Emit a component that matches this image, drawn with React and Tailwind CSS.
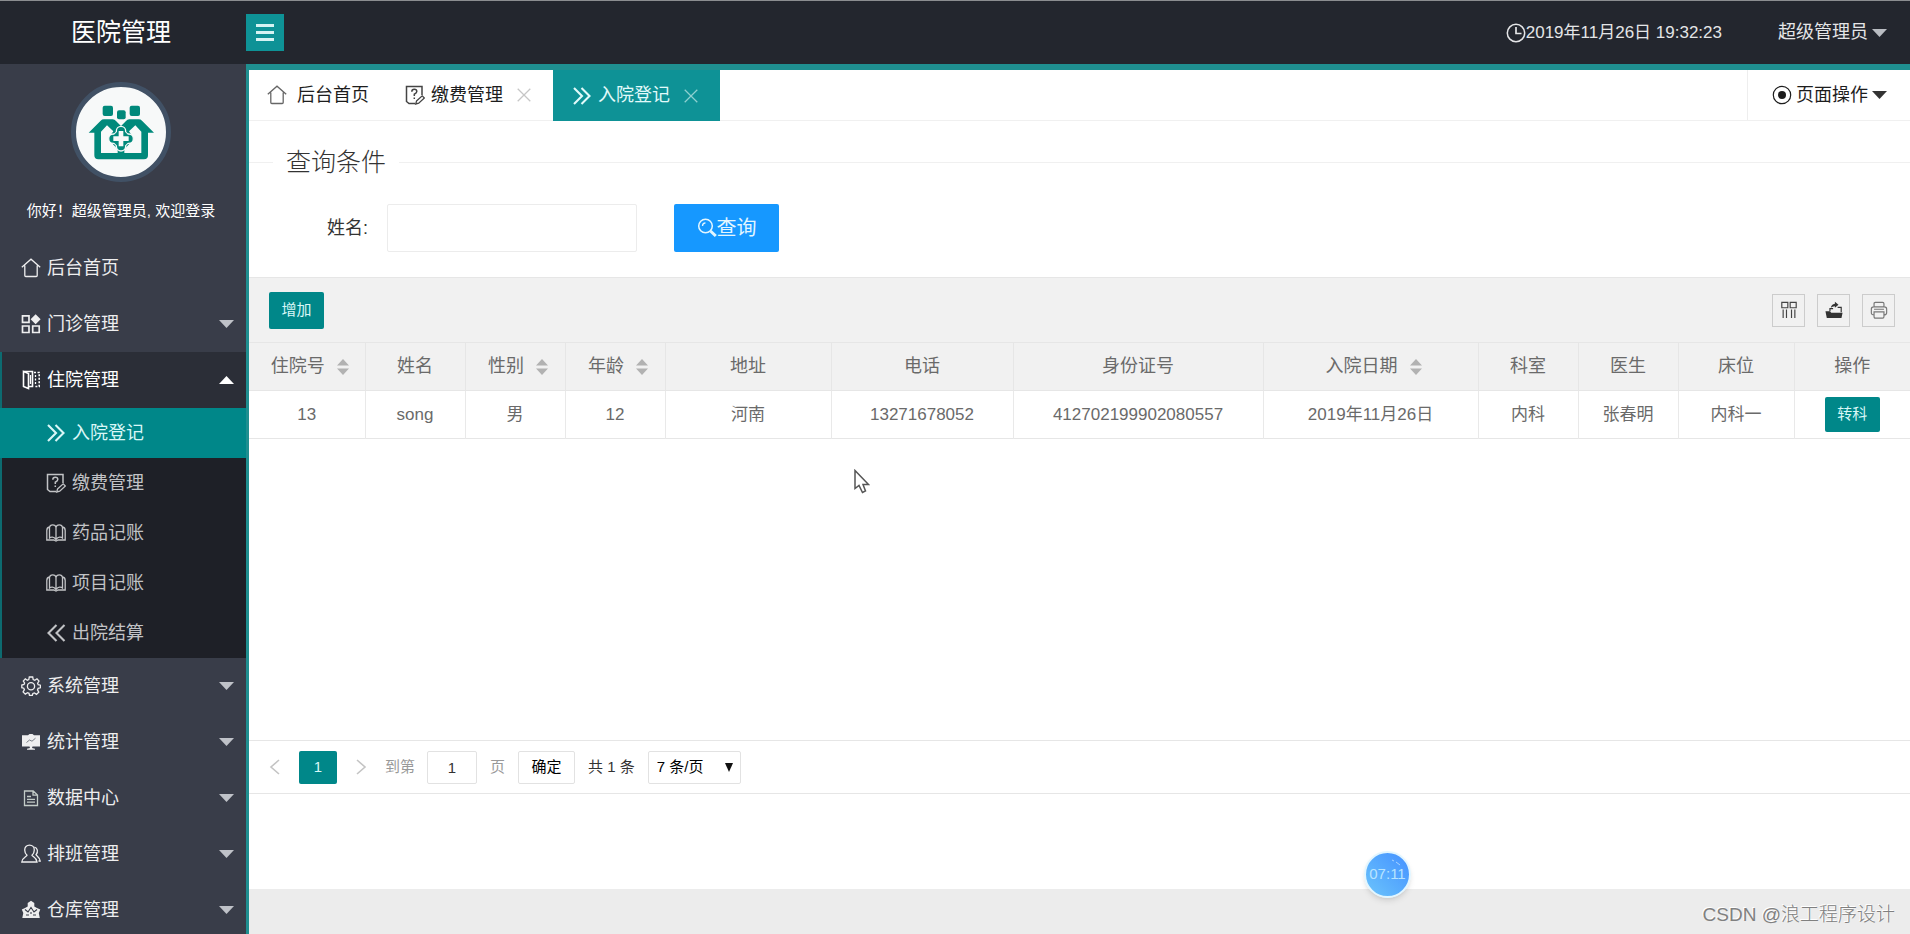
import React from 'react';

const Svg = ({ size = 20, className = '', children }) => (
    <svg
        width={size}
        height={size}
        viewBox="0 0 20 20"
        fill="none"
        stroke="currentColor"
        strokeWidth="1.3"
        aria-hidden="true"
        className={`shrink-0 ${className}`}
    >
        {children}
    </svg>
);

const HomeIcon = (props) => (
    <Svg {...props}>
        <path d="M.8 9.2 10 1.2l9.200 8M3.800 7.500V17.500Q3.800 18.500 4.800 18.500H15.200Q16.200 18.500 16.200 17.500V7.500" />
    </Svg>
);

const ModuleIcon = (props) => (
    <Svg {...props}>
        <path strokeWidth="1.700" d="M1.500 1.900h6.500v6.500H1.500zM1.500 12h6.500v6.500H1.500zM11.700 12h6.500v6.500h-6.500z" />
        <path fill="currentColor" stroke="none" d="m14.600.2 5 5-5 5-5-5z" />
    </Svg>
);

const BookmarkIcon = (props) => (
    <Svg {...props}>
        <path strokeWidth="1.600" d="M2.500 1.500 7.500 3.500V18.500L2.500 16.500z" />
        <path strokeWidth="1.600" d="M2.500 1.500H11.500V16.500h-4" />
        <path d="M9.500 5v9" />
        <path strokeWidth="1.600" strokeDasharray="2 1.500" d="M13 2.500h5.200v14H13" />
        <path strokeDasharray="2 1.500" d="M14.500 5v10" />
    </Svg>
);

const NextIcon = (props) => (
    <Svg {...props}>
        <path strokeWidth="2.100" d="m2 2 8 8-8 8M9.500 2l8 8-8 8" />
    </Svg>
);

const PrevIcon = (props) => (
    <Svg {...props}>
        <path strokeWidth="2.100" d="m10.500 2-8 8 8 8M18.500 2l-8 8 8 8" />
    </Svg>
);

const SurveyIcon = (props) => (
    <Svg {...props}>
        <path strokeWidth="1.500" d="M17 10V1.500H1.500v15L4 18.500h6" />
        <path strokeWidth="1.500" d="M6.800 6.700q0-2.400 2.500-2.400t2.500 2.200q0 1.500-2.500 2.700v1.800M9.300 12.500V14" />
        <path d="m11.500 16 5.700-5.200 2.200 2.200-5.700 5.200-3 .8z" />
    </Svg>
);

const ReadIcon = (props) => (
    <Svg {...props}>
        <path d="M10 4.500v12M10 4.500Q9.500 1.800 6.700 1.800T3.500 4.500v10.500q1.200-1 3-.8T10 16.500M10 4.500q.5-2.700 3.300-2.700t3.200 2.700v10.500q-1.200-1-3-.8T10 16.500" />
        <path d="M3.500 4Q.8 4.500.8 7.500v9.500h7l2.200 1 2.200-1h7V7.500Q19.200 4.500 16.500 4" />
    </Svg>
);

const GearIcon = (props) => (
    <Svg {...props}>
        <path d="M8.300 1h3.400l.5 2.600 1.600.7L16 2.800l2 2.200-1.400 2.200.6 1.500 2.200.5v2.600l-2.300.6-.6 1.500 1.300 2.200-2.300 2.200-2.100-1.400-1.500.6-.6 2H8.500L8 17.300l-1.500-.6-2.200 1.400-2.200-2.200 1.300-2.200-.6-1.500-2-.5V9l2.200-.5.6-1.500L2.300 5l2-2.200 2 1.500 1.500-.7z" />
        <circle cx="10" cy="10.300" r="3.600" />
    </Svg>
);

const ChartIcon = (props) => (
    <Svg {...props}>
        <path fill="currentColor" stroke="none" d="M1 3.300h6L8.500 2h3L13 3.300h6v11.200h-7.500L11 16l3 .8v.9H6v-.9L9 16l-.5-1.500H1z" />
        <path stroke="#7b8088" strokeWidth="1" d="m5.500 10.500 3-2.500 2.500 1.200 3.500-3" />
    </Svg>
);

const FileIcon = (props) => (
    <Svg {...props}>
        <path stroke="#c3ccc8" d="M3.500 3h8.700L16.500 7v10.500h-13zM12 3v4.200h4.500M6 8.500h4M6 11.300h8M6 14.200h8" />
    </Svg>
);

const UserIcon = (props) => (
    <Svg {...props}>
        <path d="M8.500 1.200c3 0 4.800 2 4.800 4.800 0 2.300-1 4-2.300 5.200.5 1.500 4.200 1.700 5 6.800H.8c.4-4.500 4.700-5.300 5.200-6.800C4.700 10 3.700 8.300 3.700 6c0-2.800 1.800-4.800 4.800-4.800z" />
        <path d="M13.300 3c3.300 1 4.200 5 1.700 7.700.5 1 3.500 2.300 4.200 6.300h-1.700" />
    </Svg>
);

const TreeIcon = (props) => (
    <Svg {...props}>
        <path fill="currentColor" stroke="none" d="M10 .8 13.300 3v3.500L16 8l3.300 1.500-1.500 3.500 1 5H1.300l1-5L.8 9.500 4 8l2.700-1.500V3z" />
        <path stroke="#393d49" strokeWidth="1.100" d="M4 9.500 7 12l3-4.500 3 4.500 3-2.500M5 15h3m4 0h3M10 12v2" />
    </Svg>
);

const ClockIcon = (props) => (
    <Svg {...props}>
        <circle cx="10" cy="10" r="8.700" strokeWidth="1.500" />
        <path strokeWidth="1.700" d="M10 4v6.500h5.500" />
    </Svg>
);

const RadioIcon = (props) => (
    <Svg {...props}>
        <circle cx="10" cy="10" r="8.700" strokeWidth="1.200" />
        <circle cx="10" cy="10" r="4" fill="currentColor" stroke="none" />
    </Svg>
);

const SearchIcon = (props) => (
    <Svg {...props}>
        <circle cx="8.500" cy="8" r="6.800" strokeWidth="1.500" />
        <path d="M5.500 8q0-3 3-3.200" />
        <path strokeWidth="3" d="m13.500 13 5.300 5" />
    </Svg>
);

const ColumnsIcon = (props) => (
    <Svg {...props}>
        <path d="M2 1.500h6.700v6H2zM11.300 1.500H18v6h-6.700zM3.500 9.500v9.500M7.200 9.500v9.500M12.800 9.500v9.500M16.500 9.500v9.500" />
    </Svg>
);

const ExportIcon = (props) => (
    <Svg {...props}>
        <path fill="currentColor" stroke="none" d="M.5 11.500h5l1.500 1.500h12.500l-1.200 6H2z" />
        <path d="M5.500 11.500V8.500H9M14 7h4v5.500" />
        <path fill="currentColor" stroke="none" d="M6.500 7.500q.5-4 4.500-4.500V.8l4 3.300-4 3.400V5.800Q8 5.800 6.500 7.500z" />
    </Svg>
);

const PrinterIcon = (props) => (
    <Svg {...props}>
        <path d="M4.500 6.500V3q0-1.500 1.500-1.500h8q1.500 0 1.500 1.500v3.500M4.500 15.500Q1.500 15.500 1.500 13V9Q1.500 6.500 4 6.500h12Q18.500 6.500 18.500 9v4q0 2.500-3 2.500M4.500 12h11v5.500q0 1.500-1.500 1.500H6q-1.500 0-1.500-1.500zM4.500 9.200h11" />
    </Svg>
);

const CloseIcon = (props) => (
    <Svg {...props}>
        <path strokeWidth="1.800" d="m1 1 18 18M19 1 1 19" />
    </Svg>
);

const Caret = ({ up = false, className = '' }) => (
    <svg width="15" height="8" viewBox="0 0 15 8" aria-hidden="true" className={`shrink-0 ${className}`}>
        <path fill="currentColor" d={up ? 'M0 8h15L7.500 0z' : 'M0 0h15L7.500 8z'} />
    </svg>
);

const SortIcon = () => (
    <svg width="12" height="16" viewBox="0 0 12 16" aria-hidden="true" className="text-[#b2b2b2]">
        <path fill="currentColor" d="M0 6.500h12L6 0zM0 9.500h12l-6 6.500z" />
    </svg>
);

const Logo = () => (
    <svg viewBox="0 0 270 270" className="h-full w-full" aria-hidden="true">
        <g fill="#00897b">
            <rect x="80" y="56" width="31" height="31" rx="6" />
            <rect x="123" y="70" width="26" height="27" rx="6" />
            <rect x="161" y="56" width="31" height="31" rx="6" />
            <path d="M38 137 74 101Q78 97 84 97H110Q116 97 120 102L135 117 150 102Q154 97 160 97H188Q194 97 198 101L234 137H216V205Q216 217 204 217H67Q55 217 55 205V137Z" />
        </g>
        <path fill="#f7f9f9" d="M75 198V134L93 115 112 133 96 155 125 187V198ZM196 198V134L178 115 159 133 174 155 145 187V198Z" />
        <g fill="#f7f9f9">
            <rect x="109" y="129" width="52" height="52" transform="rotate(45 135 155)" />
            <circle cx="135" cy="132" r="16" />
            <circle cx="135" cy="178" r="16" />
            <circle cx="112" cy="155" r="16" />
            <circle cx="158" cy="155" r="16" />
        </g>
        <g fill="#00897b">
            <rect x="112" y="132" width="46" height="46" transform="rotate(45 135 155)" />
            <circle cx="135" cy="132" r="12" />
            <circle cx="135" cy="178" r="12" />
            <circle cx="112" cy="155" r="12" />
            <circle cx="158" cy="155" r="12" />
        </g>
        <path fill="#f7f9f9" d="M128 132h14v16h16v14h-16v16h-14v-16h-16v-14h16z" />
    </svg>
);

const SUB_MENU = [
    { label: '入院登记', icon: NextIcon, active: true },
    { label: '缴费管理', icon: SurveyIcon },
    { label: '药品记账', icon: ReadIcon },
    { label: '项目记账', icon: ReadIcon },
    { label: '出院结算', icon: PrevIcon },
];

const MENU = [
    { label: '后台首页', icon: HomeIcon },
    { label: '门诊管理', icon: ModuleIcon, expandable: true },
    { label: '住院管理', icon: BookmarkIcon, expandable: true, children: SUB_MENU },
    { label: '系统管理', icon: GearIcon, expandable: true },
    { label: '统计管理', icon: ChartIcon, expandable: true },
    { label: '数据中心', icon: FileIcon, expandable: true },
    { label: '排班管理', icon: UserIcon, expandable: true },
    { label: '仓库管理', icon: TreeIcon, expandable: true },
];

const COLUMNS = [
    { title: '住院号', width: 'w-[116px]', sort: true },
    { title: '姓名', width: 'w-[100px]' },
    { title: '性别', width: 'w-[100px]', sort: true },
    { title: '年龄', width: 'w-[100px]', sort: true },
    { title: '地址', width: 'w-[166px]' },
    { title: '电话', width: 'w-[182px]' },
    { title: '身份证号', width: 'w-[250px]' },
    { title: '入院日期', width: 'w-[215px]', sort: true },
    { title: '科室', width: 'w-[100px]' },
    { title: '医生', width: 'w-[100px]' },
    { title: '床位', width: 'w-[116px]' },
    { title: '操作', width: '' },
];

const ROWS = [
    ['13', 'song', '男', '12', '河南', '13271678052', '412702199902080557', '2019年11月26日', '内科', '张春明', '内科一'],
];

const Header = () => (
    <header className="flex h-16 shrink-0 items-center border-t border-[#8b8d90] bg-[#23262e] text-[#e4e5e7]">
        <h1 className="w-[246px] shrink-0 pr-1 text-center text-[25px] leading-none text-white">医院管理</h1>
        <button type="button" aria-label="菜单" className="flex h-[37px] w-[38px] flex-col items-center justify-center gap-1 bg-[#0e9296]">
            <span className="h-[3px] w-[18px] bg-[#d5f3f3]" />
            <span className="h-[3px] w-[18px] bg-[#d5f3f3]" />
            <span className="h-[3px] w-[18px] bg-[#d5f3f3]" />
        </button>
        <div className="ml-auto flex items-center text-[17px]">
            <ClockIcon />
            <time>2019年11月26日 19:32:23</time>
        </div>
        <button type="button" className="mr-[23px] ml-14 flex items-center gap-1 text-[18px]">
            超级管理员
            <Caret className="text-[#b9bcc2]" />
        </button>
    </header>
);

const Sidebar = () => (
    <aside className="flex w-[246px] shrink-0 flex-col overflow-hidden bg-[#393d49] text-white">
        <div className="flex h-44 shrink-0 flex-col items-center pt-[18px] pr-1">
            <div className="h-[100px] w-[100px] rounded-full border-[5px] border-[#415165] bg-[#f7f9f9]">
                <Logo />
            </div>
            <p className="mt-[17px] text-[15px] leading-6 whitespace-nowrap">你好！超级管理员, 欢迎登录</p>
        </div>
        <nav>
            {MENU.map(({ label, icon: Icon, expandable, children }) => (
                <div key={label} className={children ? 'border-l-2 border-[#0d6b70]' : 'border-l-2 border-transparent'}>
                    <a
                        href="#"
                        className={`flex h-14 items-center gap-1.5 pr-3 pl-[19px] text-[18px] ${children ? 'bg-[#2b2e37] text-white' : 'text-[#eeeeef]'}`}
                    >
                        <Icon />
                        {label}
                        {expandable && <Caret up={!!children} className={`ml-auto ${children ? 'text-white' : 'text-[#bfc2c8]'}`} />}
                    </a>
                    {children && (
                        <ul className="bg-[#1e2027]">
                            {children.map(({ label: name, icon: SubIcon, active }) => (
                                <li key={name}>
                                    <a
                                        href="#"
                                        className={`flex h-[50px] items-center gap-1.5 text-[18px] ${active ? '-ml-0.5 bg-[#008789] pl-[46px] text-[#d9f7f7]' : 'pl-11 text-[#c2c3c6]'}`}
                                    >
                                        <SubIcon />
                                        {name}
                                    </a>
                                </li>
                            ))}
                        </ul>
                    )}
                </div>
            ))}
        </nav>
    </aside>
);

const TabBar = () => (
    <div className="flex h-[51px] shrink-0 border-b border-[#f0f0f0] text-[18px] text-[#1d1d1d]">
        <a href="#" className="flex items-center gap-2.5 px-[18px]">
            <HomeIcon className="text-[#666]" />
            后台首页
        </a>
        <div className="flex items-center pr-[22px] pl-[18px]">
            <a href="#" className="flex items-center gap-1.5">
                <SurveyIcon className="text-[#444]" />
                缴费管理
            </a>
            <button type="button" aria-label="关闭 缴费管理" className="ml-3.5 text-[#c6c6c6]">
                <CloseIcon size={14} />
            </button>
        </div>
        <div className="-mb-px flex items-center bg-[#0e9296] pr-[22px] pl-[19px] text-[#e2fafa]">
            <a href="#" className="flex items-center gap-1.5">
                <NextIcon />
                入院登记
            </a>
            <button type="button" aria-label="关闭 入院登记" className="ml-3.5 text-[#8ed0d0]">
                <CloseIcon size={14} />
            </button>
        </div>
        <button type="button" className="ml-auto flex items-center gap-1 border-l border-[#eee] pr-[23px] pl-6">
            <RadioIcon />
            页面操作
            <Caret className="text-[#333]" />
        </button>
    </div>
);

const SearchForm = () => (
    <form onSubmit={(e) => e.preventDefault()}>
        <fieldset className="mt-[21px] border-t border-[#f0f0f0]">
            <legend className="ml-6 px-[13px] text-[25px] leading-10 font-light text-[#333]">查询条件</legend>
            <div className="flex items-center pt-[22px] pb-[25px] text-[18px]">
                <label htmlFor="patient-name" className="w-[138px] pr-[19px] text-right text-[#333]">
                    姓名:
                </label>
                <input id="patient-name" type="text" className="h-12 w-[250px] rounded-xs border border-[#ececec] px-3 outline-none" />
                <button type="submit" className="ml-[37px] flex h-12 w-[105px] items-center justify-center rounded-xs bg-[#1698ff] text-[20px] text-[#e3f6ff]">
                    <SearchIcon />
                    查询
                </button>
            </div>
        </fieldset>
    </form>
);

const TOOLS = [
    { name: '筛选列', icon: ColumnsIcon, color: 'text-[#444]' },
    { name: '导出', icon: ExportIcon, color: 'text-[#333]' },
    { name: '打印', icon: PrinterIcon, color: 'text-[#777]' },
];

const PatientTable = () => (
    <section>
        <div className="flex h-[65px] items-center border-t border-[#e6e6e6] bg-[#f1f1f1] pr-[15px] pl-5">
            <button type="button" className="h-[37px] w-[55px] rounded-xs bg-[#008789] text-[15px] text-[#d9f7f7]">
                增加
            </button>
            <div className="ml-auto flex gap-3">
                {TOOLS.map(({ name, icon: Icon, color }) => (
                    <button key={name} type="button" aria-label={name} className={`flex h-[33px] w-[33px] items-center justify-center border border-[#ccc] ${color}`}>
                        <Icon size={18} />
                    </button>
                ))}
            </div>
        </div>
        <table className="w-full table-fixed border-collapse text-[#6a6a6a]">
            <thead className="bg-[#f1f1f1]">
                <tr className="h-12 border-y border-[#e6e6e6]">
                    {COLUMNS.map(({ title, width, sort }) => (
                        <th key={title} className={`${width} border-r border-[#e6e6e6] text-[18px] font-normal last:border-r-0`}>
                            {sort ? (
                                <button type="button" className="inline-flex items-center gap-3 pl-1.5 align-middle">
                                    {title}
                                    <SortIcon />
                                </button>
                            ) : (
                                title
                            )}
                        </th>
                    ))}
                </tr>
            </thead>
            <tbody>
                {ROWS.map((row) => (
                    <tr key={row[0]} className="h-12 border-b border-[#e6e6e6] text-center text-[17px]">
                        {row.map((cell, i) => (
                            <td key={i} className="border-r border-[#e9e9e9]">
                                {cell}
                            </td>
                        ))}
                        <td>
                            <button type="button" className="h-[35px] w-[55px] rounded-xs bg-[#008789] align-middle text-[15px] text-[#d9f7f7]">
                                转科
                            </button>
                        </td>
                    </tr>
                ))}
            </tbody>
        </table>
    </section>
);

const Pagination = () => (
    <div className="flex h-[54px] shrink-0 items-center border-y border-[#e6e6e6] pl-5 text-[15px] text-[#333]">
        <button type="button" aria-label="上一页" className="text-[#c4c4c4]">
            <svg width="12" height="16" viewBox="0 0 12 16" fill="none" stroke="currentColor" strokeWidth="1.600">
                <path d="M10 1 2 8l8 7" />
            </svg>
        </button>
        <button type="button" className="ml-[18px] h-[33px] w-[38px] rounded-xs bg-[#008789] text-[#d9f7f7]">
            1
        </button>
        <button type="button" aria-label="下一页" className="ml-[18px] text-[#c4c4c4]">
            <svg width="12" height="16" viewBox="0 0 12 16" fill="none" stroke="currentColor" strokeWidth="1.600">
                <path d="m2 1 8 7-8 7" />
            </svg>
        </button>
        <label htmlFor="page-no" className="ml-[18px] text-[#999]">到第</label>
        <input id="page-no" type="text" defaultValue="1" className="ml-3 h-[33px] w-[50px] rounded-xs border border-[#e2e2e2] text-center outline-none" />
        <span className="ml-[13px] text-[#999]">页</span>
        <button type="button" className="ml-[13px] h-[33px] w-[57px] rounded-xs border border-[#e2e2e2] text-black">
            确定
        </button>
        <span className="ml-[13px]">共 1 条</span>
        <div className="relative ml-[13px]">
            <select aria-label="每页条数" className="h-[33px] w-[93px] appearance-none rounded-xs border border-[#e2e2e2] bg-white pl-2 text-black outline-none">
                <option>7 条/页</option>
            </select>
            <svg width="8" height="9" viewBox="0 0 8 9" aria-hidden="true" className="pointer-events-none absolute top-3 right-2">
                <path fill="#111" d="M0 0h8L4 9z" />
            </svg>
        </div>
    </div>
);

const App = () => (
    <div className="relative flex h-screen flex-col overflow-hidden bg-[#ececec] font-['Liberation_Sans','Noto_Sans_CJK_SC',sans-serif]">
        <Header />
        <div className="flex min-h-0 flex-1">
            <Sidebar />
            <main className="flex min-w-0 flex-1 flex-col border-t-[6px] border-l-[3px] border-[#1f8f90]">
                <div className="flex min-h-0 flex-1 flex-col bg-white">
                    <TabBar />
                    <SearchForm />
                    <PatientTable />
                    <div className="min-h-0 flex-1" />
                    <Pagination />
                    <div className="h-[95px] shrink-0" />
                </div>
                <footer className="flex h-[45px] shrink-0 items-center justify-end bg-[#ececec] pt-2 pr-[15px] text-[19px] font-light text-[#808080] [text-shadow:-1px_-1px_0_#fff]">
                    CSDN @浪工程序设计
                </footer>
            </main>
        </div>

        {/* Floating timer */}
        <div className="absolute right-[499px] bottom-9 flex h-[47px] w-[47px] items-center justify-center rounded-full border-2 border-[#e2f6ff] bg-linear-to-bl from-[#4590ff] to-[#6cc4fb] text-[15px] text-[#b8e4ff] shadow-md">
            07:11
            <svg width="10" height="8" viewBox="0 0 10 8" fill="none" stroke="#a9d4ff" aria-hidden="true" className="absolute top-1.5 right-2">
                <path d="m1 1 2 1M5 3l4 3" />
            </svg>
        </div>

        {/* Mouse pointer */}
        <svg width="16" height="25" viewBox="0 0 16 25" aria-hidden="true" className="pointer-events-none absolute top-[469px] left-[854px]">
            <path fill="#fff" stroke="#555" strokeWidth="1.500" d="M1 1.500V19.500L5 16.500 8.500 23.500 11.500 22 9 15.500H14.500z" />
        </svg>
    </div>
);

export default App;
